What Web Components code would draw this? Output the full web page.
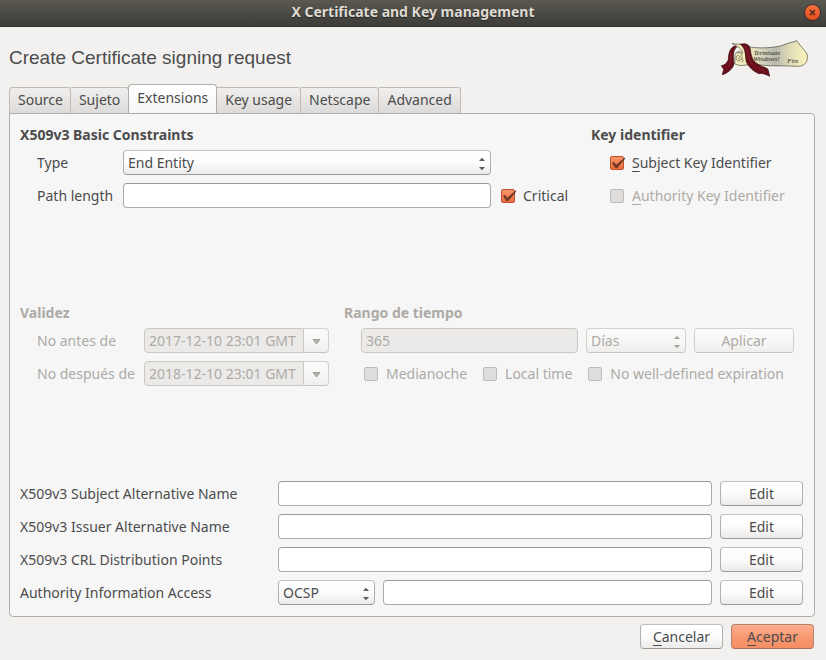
<!DOCTYPE html>
<html lang="es">
<head>
<meta charset="utf-8">
<title>X Certificate and Key management</title>
<style>
  :root {
    --ink: #4c4c4c;
    --dim: #aeaaa5;
    --line: #b0aca6;
    --font: "Noto Sans", "Open Sans", sans-serif;
  }
  body { margin: 0; background: #f2f1f0; color: var(--ink); font: 14px/20px var(--font); }
</style>
</head>
<body>
<key-app></key-app>
<script>
const define = (name, css, html, setup) => {
  const template = document.createElement('template');
  template.innerHTML = `<style>*{box-sizing:border-box}${css}</style>${html}`;
  customElements.define(name, class extends HTMLElement {
    constructor() {
      super();
      this.attachShadow({ mode: 'open' }).append(template.content.cloneNode(true));
    }
    connectedCallback() {
      if (setup && !this.ready) { this.ready = true; setup(this, s => this.shadowRoot.querySelector(s)); }
    }
  });
};

const raised = `
  border: 1px solid #b3afaa; border-top-color: #c3c0bc; border-bottom-color: #9d9994; border-radius: 4px;
  background: linear-gradient(#fff, #fcfcfc 50%, #eceae9);`;
const raisedOff = `color: var(--dim); border-color: #d3d1ce; border-bottom-color: #c6c3bf; background: linear-gradient(#fafafa, #f7f7f6 50%, #efeeed);`;
const field = `
  font: inherit; color: var(--ink); height: 25px; min-width: 0; margin: 0; padding: 0 4px;
  border: 1px solid #aeaaa4; border-top-color: #9f9a94; border-radius: 4px; background: #fff; outline: none;`;
const fieldOff = `color: var(--dim); border-color: #cbc8c4; background: #ebeae9; opacity: 1;`;
const mnemonic = `:host([mnemonic]) .t::first-letter { text-decoration: underline; text-decoration-thickness: 1px; text-underline-offset: 3px; }`;

define('push-button', `
  :host { display: block; width: 83px; }
  button { font: inherit; color: var(--ink); width: 100%; height: 25px; padding: 0; display: flex; align-items: center; justify-content: center; ${raised} }
  button:disabled { ${raisedOff} }
  :host([primary]) button { background: linear-gradient(#fcae8d, #f89a73 50%, #f68d62); border-color: #b5826c; border-bottom-color: #a56f5a; }
  .t { display: inline-block; }
  ${mnemonic}`,
  `<button type="button"><span class="t"><slot></slot></span></button>`,
  (host, $) => {
    $('button').disabled = host.hasAttribute('disabled');
    if (host.hasAttribute('mnemonic')) $('.t').textContent = host.textContent;
  });

define('combo-box', `
  :host { display: grid; }
  select, svg { grid-area: 1 / 1; }
  select { font: inherit; color: var(--ink); width: 100%; height: 25px; margin: 0; padding: 0 4px; appearance: none; ${raised} }
  select:disabled { ${raisedOff} opacity: 1; }
  svg { justify-self: end; align-self: center; margin: 3px 5px 0 0; pointer-events: none; fill: #5c5b59; }
  select:disabled + svg { fill: #a5a29e; }`,
  `<select></select><svg width="8" height="14" viewBox="0 0 8 14"><path d="M1 4 4 .8 7 4ZM1 10 4 13.2 7 10Z"/></svg>`,
  (host, $) => {
    $('select').add(new Option(host.getAttribute('value')));
    $('select').disabled = host.hasAttribute('disabled');
    $('select').setAttribute('aria-label', host.getAttribute('name'));
  });

define('check-option', `
  :host { display: flex; align-items: center; height: 25px; }
  .box { display: grid; width: 14px; height: 14px; margin-right: 8px; flex: none; }
  input, svg { grid-area: 1 / 1; }
  input { appearance: none; margin: 0; width: 14px; height: 14px; border: 1px solid #9d9994; border-radius: 2px; background: #fff; }
  input:checked { background: linear-gradient(#fa9468, #ed6c3e); border-color: #b9512d; }
  input:disabled { background: #dfdedc; border-color: #bfbcb7; }
  svg { display: none; overflow: visible; pointer-events: none; }
  input:checked + svg { display: block; }
  label { white-space: nowrap; }
  :host([disabled]) label { color: var(--dim); }
  ${mnemonic}
  .t { display: block; }`,
  `<span class="box"><input type="checkbox" id="c"><svg width="14" height="14" viewBox="0 0 14 14"><path d="M2 7 3.8 5.8 6.3 8.8 14.6 1.6 15.3 2.4 7.2 12 5.4 12Z" fill="#6e3924"/></svg></span><label class="t" for="c"></label>`,
  (host, $) => {
    $('label').textContent = host.getAttribute('label');
    $('input').checked = host.hasAttribute('checked');
    $('input').disabled = host.hasAttribute('disabled');
  });

define('text-row', `
  :host { display: flex; align-items: center; }
  label { width: var(--label, 86px); flex: none; white-space: nowrap; }
  input { ${field} flex: 1; }
  combo-box { width: 97px; margin-right: 8px; }
  combo-box[hidden] { display: none; }
  ::slotted(push-button) { margin-left: 8px; }`,
  `<label for="i"></label><combo-box hidden name="Method" value="OCSP"></combo-box><input id="i" type="text"><slot></slot>`,
  (host, $) => {
    $('label').textContent = host.getAttribute('label');
    if (host.hasAttribute('method')) $('combo-box').hidden = false;
  });

define('choice-row', `
  :host { display: flex; align-items: center; }
  label { width: var(--label, 86px); flex: none; }
  .w { display: grid; flex: 1; }
  select, svg { grid-area: 1 / 1; }
  select { font: inherit; color: var(--ink); height: 25px; margin: 0; padding: 0 4px; appearance: none; ${raised} }
  svg { justify-self: end; align-self: center; margin: 3px 5px 0 0; pointer-events: none; fill: #5c5b59; }`,
  `<label for="s"></label><span class="w"><select id="s"></select><svg width="8" height="14" viewBox="0 0 8 14"><path d="M1 4 4 .8 7 4ZM1 10 4 13.2 7 10Z"/></svg></span>`,
  (host, $) => {
    $('label').textContent = host.getAttribute('label');
    $('select').add(new Option(host.getAttribute('value')));
  });

define('date-row', `
  :host { display: flex; align-items: center; color: var(--dim); }
  label { width: var(--label); flex: none; white-space: nowrap; }
  input { ${field} ${fieldOff} width: 160px; border-radius: 4px 0 0 4px; }
  button { width: 25px; height: 25px; padding: 0; display: grid; place-items: center; ${raised} ${raisedOff} border-left: 0; border-radius: 0 4px 4px 0; }
  svg { fill: #b5b3b0; stroke: #a09d99; margin-top: 3px; }`,
  `<label for="d"></label><input id="d" type="text" disabled><button type="button" disabled aria-label="Calendar"><svg width="9" height="6" viewBox="0 0 9 6"><path d="M1 .5H8L4.5 5Z"/></svg></button>`,
  (host, $) => {
    $('label').textContent = host.getAttribute('label');
    $('input').value = host.getAttribute('value');
  });

define('range-input', `
  :host { display: grid; flex: 1; }
  input { ${field} ${fieldOff} width: 100%; }`,
  `<input type="text" aria-label="Rango de tiempo" value="365" disabled>`);

define('form-group', `
  :host { display: block; }
  :host([disabled]) { color: var(--dim); }
  h3 { font: bold 14px/20px var(--font); margin: 0 0 5px; }
  div { display: grid; gap: 8px; padding-left: var(--indent, 17px); }`,
  `<h3></h3><div><slot></slot></div>`,
  (host, $) => { $('h3').textContent = host.getAttribute('label'); });

define('tab-bar', `
  :host { display: flex; align-items: flex-end; height: 30px; margin-bottom: -1px; }
  button { font: inherit; color: var(--ink); height: 27px; padding: 0 8px 2px; white-space: nowrap;
    border: 1px solid #bfbbb6; border-left-width: 0; border-bottom-color: var(--line); border-top-right-radius: 3px;
    background: linear-gradient(#f0efee, #dddbd9); }
  button:first-child { border-left-width: 1px; border-top-left-radius: 4px; padding-right: 7px; }
  button[aria-selected=true] { height: 30px; border: 1px solid var(--line); border-bottom-color: #f6f6f6; margin-left: -1px;
    border-radius: 4px 4px 0 0; background: linear-gradient(#fff, #f6f6f6); }
  div { display: flex; align-items: flex-end; }`,
  `<div role="tablist"></div>`,
  (host, $) => {
    const current = host.getAttribute('current');
    for (const name of host.getAttribute('tabs').split(',')) {
      const tab = document.createElement('button');
      tab.type = 'button';
      tab.setAttribute('role', 'tab');
      tab.setAttribute('aria-selected', name === current);
      tab.textContent = name;
      $('div').append(tab);
    }
  });

define('title-bar', `
  :host { display: grid; grid-template-columns: 1fr auto 1fr; align-items: center; height: 27px; padding: 0 5px; background: linear-gradient(#5a5850, #3d3c38); border-bottom: 1px solid #33322f; }
  h1 { grid-column: 2; margin: 0; font: bold 14px/20px var(--font); color: #dfdbd2; text-shadow: 0 1px 1px #222; padding-bottom: 3px; }
  button { justify-self: end; width: 17px; height: 17px; padding: 0; margin-bottom: 2px; border: 1px solid #333029; border-radius: 50%; background: linear-gradient(#f4703f, #e64d1c); display: grid; place-items: center; }
  svg { stroke: #44261b; stroke-width: 1.3; }`,
  `<h1><slot></slot></h1><button type="button" aria-label="Close"><svg width="7" height="7" viewBox="0 0 7 7"><path d="M1 1 6 6M6 1 1 6"/></svg></button>`);

define('scroll-logo', `
  :host { display: block; width: 100px; height: 50px; }
  svg { display: block; }
  text { font: italic 20px "Liberation Serif", serif; fill: #26261f; }`,
  `<svg width="100" height="50" viewBox="0 0 300 150" role="img" aria-label="Scroll">
    <defs>
      <linearGradient id="p"><stop offset="0" stop-color="#f3edbd"/><stop offset=".25" stop-color="#d8d6bd"/><stop offset=".48" stop-color="#b9b9ad"/><stop offset=".72" stop-color="#dfdcb7"/><stop offset="1" stop-color="#fcf5bd"/></linearGradient>
    </defs>
    <path d="M88 36C125 46 182 42 207 31 220 25 231 26 242 20 250 33 264 45 273 60 277 77 270 89 262 93 250 99 240 97 224 96 185 95 160 97 124 92L98 84Z" fill="url(#p)" stroke="#48453a" stroke-width="2"/>
    <path d="M48 28C61 34 67 27 82 33 94 44 99 65 95 92 84 95 66 96 56 89L57 62C62 49 73 51 79 59 81 46 64 37 48 28Z" fill="#f4edbd" stroke="#48453a" stroke-width="2"/>
    <path d="M62 59C70 51 80 60 78 71 77 82 63 84 60 74 59 64 70 61 72 69 73 75 66 77 66 71M76 75C84 75 83 83 77 85" fill="none" stroke="#55503c" stroke-width="2"/>
    <path d="M57 36C40 41 38 61 37 76 33 89 24 94 16 95L23 106 19 122C32 119 50 106 54 90 51 67 50 50 62 39Z" fill="#6d0e1b" stroke="#2e0b0e" stroke-width="2"/>
    <path d="M73 31C85 27 98 29 102 42 105 60 107 79 122 88 134 98 148 99 156 106L161 127C147 119 135 117 128 119 112 111 98 100 91 84 87 65 91 44 73 31Z" fill="#6d0e1b" stroke="#2e0b0e" stroke-width="2"/>
    <path d="M84 34C100 47 91 72 113 95M46 56C43 68 47 81 38 98M125 101 148 112" fill="none" stroke="#8c2f3a" stroke-width="2"/>
    <text x="113" y="62">Terminate</text><text x="112" y="82">Windows!</text><text x="214" y="88">Fire</text>
  </svg>`);

define('key-app', `
  :host { display: flex; flex-direction: column; min-height: 100vh; }
  main { flex: 1; display: flex; flex-direction: column; padding: 7px 11px 11px 9px; }
  header { display: flex; justify-content: space-between; align-items: center; height: 50px; }
  h2 { margin: 0 0 3px; font: 19px/24px "Liberation Sans", sans-serif; }
  scroll-logo { margin-right: -1px; }
  .panel { flex: 1; display: flex; flex-direction: column; justify-content: space-between; padding: 11px 11px 11px 10px; border: 1px solid var(--line); border-radius: 0 4px 4px 4px; background: #f6f6f6; }
  .top { display: grid; grid-template-columns: 1fr 100px 212px; }
  .top > check-option { align-self: end; margin-left: 10px; }
  .keys { --indent: 19px; }
  .mid { display: grid; grid-template-columns: 324fr 459fr; --label: 107px; }
  .mid form-group:last-child { padding-right: 9px; }
  .line { display: flex; gap: 8px; }
  .line combo-box, .line push-button { width: 100px; }
  .checks { gap: 16px; padding-left: 3px; }
  .low { display: grid; gap: 8px; --label: 258px; }
  footer { display: flex; justify-content: flex-end; gap: 8px; padding: 7px 1px 0 0; }`,
  `<title-bar>X Certificate and Key management</title-bar>
  <main>
    <header><h2>Create Certificate signing request</h2><scroll-logo></scroll-logo></header>
    <tab-bar tabs="Source,Sujeto,Extensions,Key usage,Netscape,Advanced" current="Extensions"></tab-bar>
    <section class="panel" role="tabpanel">
      <div class="top">
        <form-group label="X509v3 Basic Constraints">
          <choice-row label="Type" value="End Entity"></choice-row>
          <text-row label="Path length"></text-row>
        </form-group>
        <check-option label="Critical" checked></check-option>
        <form-group class="keys" label="Key identifier">
          <check-option label="Subject Key Identifier" checked mnemonic></check-option>
          <check-option label="Authority Key Identifier" disabled mnemonic></check-option>
        </form-group>
      </div>
      <div class="mid">
        <form-group label="Validez" disabled>
          <date-row label="No antes de" value="2017-12-10 23:01 GMT"></date-row>
          <date-row label="No después de" value="2018-12-10 23:01 GMT"></date-row>
        </form-group>
        <form-group label="Rango de tiempo" disabled>
          <div class="line"><range-input></range-input><combo-box name="Unidad" value="Días" disabled></combo-box><push-button disabled>Aplicar</push-button></div>
          <div class="line checks"><check-option label="Medianoche" disabled></check-option><check-option label="Local time" disabled></check-option><check-option label="No well-defined expiration" disabled></check-option></div>
        </form-group>
      </div>
      <div class="low">
        <text-row label="X509v3 Subject Alternative Name"><push-button>Edit</push-button></text-row>
        <text-row label="X509v3 Issuer Alternative Name"><push-button>Edit</push-button></text-row>
        <text-row label="X509v3 CRL Distribution Points"><push-button>Edit</push-button></text-row>
        <text-row label="Authority Information Access" method><push-button>Edit</push-button></text-row>
      </div>
    </section>
    <footer><push-button mnemonic>Cancelar</push-button><push-button mnemonic primary>Aceptar</push-button></footer>
  </main>`);
</script>
</body>
</html>
